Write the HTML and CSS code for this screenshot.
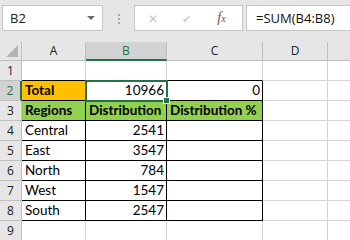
FILE: index.html
```html
<!DOCTYPE html>
<html>
<head>
 <title>sheet</title>
 <link rel="stylesheet" href="styles.css">
</head>
<body>
  <div class="bar">
    <div class="namebox">B2<span class="drop"></span></div>
    <div class="dots"></div>
    <div class="btns">
      <span class="btn-x">&#x2715;</span>
      <span class="btn-ok">&#x2714;</span>
      <span class="btn-fx"><i>f</i><i class="x">x</i></span>
    </div>
    <div class="formula">=SUM(B4:B8)</div>
  </div>
  <div class="sheet">
    <div class="grid">
      <div class="corner"><span class="tri"></span></div>
      <div class="colh">A</div>
      <div class="colh sel">B</div>
      <div class="colh">C</div>
      <div class="colh">D</div>
      <div class="colh last"></div>

      <div class="rowh">1</div>
      <div class="c above"></div><div class="c above"></div><div class="c above"></div><div class="c"></div><div class="c last"></div>

      <div class="rowh rsel">2</div>
      <div class="c t orange b">Total</div><div class="c t num">10966</div><div class="c t num">0</div><div class="c"></div><div class="c last"></div>

      <div class="rowh">3</div>
      <div class="c t green b">Regions</div><div class="c t green b">Distribution</div><div class="c t green b">Distribution %</div><div class="c"></div><div class="c last"></div>

      <div class="rowh">4</div>
      <div class="c t">Central</div><div class="c t num">2541</div><div class="c t"></div><div class="c"></div><div class="c last"></div>

      <div class="rowh">5</div>
      <div class="c t">East</div><div class="c t num">3547</div><div class="c t"></div><div class="c"></div><div class="c last"></div>

      <div class="rowh">6</div>
      <div class="c t">North</div><div class="c t num">784</div><div class="c t"></div><div class="c"></div><div class="c last"></div>

      <div class="rowh">7</div>
      <div class="c t">West</div><div class="c t num">1547</div><div class="c t"></div><div class="c"></div><div class="c last"></div>

      <div class="rowh">8</div>
      <div class="c t">South</div><div class="c t num">2547</div><div class="c t"></div><div class="c"></div><div class="c last"></div>

      <div class="rowh">9</div>
      <div class="c"></div><div class="c"></div><div class="c"></div><div class="c"></div><div class="c last"></div>
    </div>
    <div class="selection"><span class="handle"></span></div>
  </div>
</body>
</html>
```

FILE: styles.css
```css
body{margin:0;background:#e6e6e6;font-family:"Open Sans","Liberation Sans",sans-serif;overflow:hidden;}

.bar{height:42px;display:flex;align-items:flex-start;padding-top:5px;box-sizing:border-box;}
.namebox{width:92px;height:24px;margin-left:2px;background:#fff;border:1px solid #c6c6c6;
  font-size:13px;line-height:24px;padding-left:7px;position:relative;color:#222;}
.drop{position:absolute;right:7px;top:10px;border-left:4px solid transparent;border-right:4px solid transparent;border-top:4px solid #6a6a6a;}
.dots{width:2px;height:10px;margin:9px 14px 0 15px;
  background:linear-gradient(#aaa 0 2px,transparent 2px 4px,#aaa 4px 6px,transparent 6px 8px,#aaa 8px 10px);}
.btns{width:107px;height:24px;background:#fff;border:1px solid #c6c6c6;display:flex;align-items:center;color:#c6c6c6;}
.btn-x{width:36px;text-align:center;font-size:12px;}
.btn-ok{width:30px;text-align:center;font-size:11px;color:#d0d0d0;}
.btn-fx{flex:1;text-align:center;font-family:"Liberation Serif",serif;color:#555;font-size:14px;}
.btn-fx .x{font-size:10px;}
.formula{flex:1;height:24px;margin-left:3px;background:#fff;border:1px solid #c6c6c6;border-right:none;
  font-size:13px;line-height:24px;padding-left:9px;color:#111;}

.sheet{position:relative;background:#fff;}
.grid{display:grid;grid-template-columns:22px 64px 81px 96px 65px 1fr;grid-template-rows:19px repeat(9,20px);}
.grid > div{box-sizing:border-box;border-right:1px solid #d4d4d4;border-bottom:1px solid #d4d4d4;white-space:nowrap;overflow:hidden;}
.corner{background:#e6e6e6;position:relative;border-color:#bfbfbf !important;}
.tri{position:absolute;right:3px;bottom:3px;border-left:12px solid transparent;border-bottom:12px solid #b4b4b4;}
.colh{background:#e6e6e6;text-align:center;font-size:12px;line-height:18px;color:#222;border-color:#bfbfbf !important;}
.colh.sel{background:#d2d2d2;border-bottom:2px solid #217346 !important;color:#217346;}
.rowh{background:#e6e6e6;text-align:center;font-size:12px;line-height:19px;color:#222;border-color:#bfbfbf !important;}
.rowh.rsel{background:#d2d2d2;color:#217346;border-right:2px solid #217346 !important;}
.c{background:#fff;font-family:Lato,"Liberation Sans",sans-serif;font-size:13.5px;line-height:19px;padding:0 3px 0 3px;color:#000;}
.c.above{border-bottom-color:#000 !important;}
.c.t{border-color:#000 !important;}
.num{text-align:right;padding-right:2px;}
.b{font-weight:bold;}
.orange{background:#ffc000;}
.green{background:#92d050;}
.last{border-right:none !important;}

.selection{position:absolute;left:85px;top:38px;width:83px;height:22px;box-sizing:border-box;border:2px solid #217346;}
.handle{position:absolute;right:-4px;bottom:-4px;width:5px;height:5px;background:#217346;border:1px solid #fff;}
```
